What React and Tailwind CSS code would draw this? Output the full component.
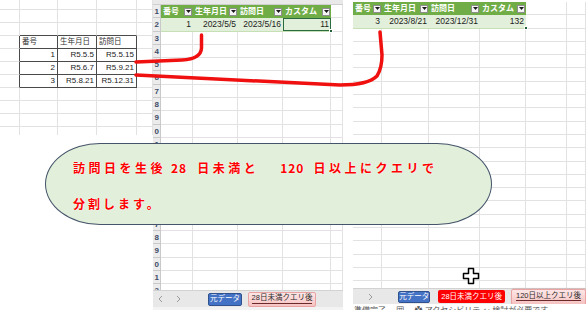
import React from 'react';

const GRID = 'border-r border-b border-[#e2e2e2]';

function DropBtn() {
  return (
    <span className="flex h-[8px] w-[8px] shrink-0 items-center justify-center border border-[#8d8d8d] bg-[#f5f5f5]">
      <svg width="5" height="3" viewBox="0 0 5 3">
        <path d="M0 0h5L2.5 3z" fill="#1a1a1a" />
      </svg>
    </span>
  );
}

function Chevron({ dir }) {
  return (
    <svg width="5" height="8" viewBox="0 0 5 8" className="shrink-0">
      <path
        d={dir === 'left' ? 'M4 1L1 4l3 3' : 'M1 1l3 3-3 3'}
        stroke="#9b9b9b"
        strokeWidth="1"
        fill="none"
      />
    </svg>
  );
}

function LeftSheet() {
  const cols = ['w-[20px]', 'w-[38px]', 'w-[39px]', 'w-[40px]', 'w-[16px]'];
  const table = [
    ['番号', '生年月日', '訪問日'],
    ['1', 'R5.5.5', 'R5.5.15'],
    ['2', 'R5.6.7', 'R5.9.21'],
    ['3', 'R5.8.21', 'R5.12.31'],
  ];
  const rows = Array.from({ length: 11 }, (_, i) => i);

  return (
    <div className="w-[153px] shrink-0">
      <div className="h-[135px] overflow-hidden">
        <div className="-mt-[3px]">
          {rows.map((r) => {
            const t = r - 3;
            const inTable = t >= 0 && t < 4;
            return (
              <div key={r} className="flex h-[13px]">
                {cols.map((w, c) => {
                  const inner = c >= 1 && c <= 3;
                  const rightDark = inTable && c <= 3;
                  const bottomDark = (inTable && inner) || (r === 2 && inner);
                  const text = inTable && inner ? table[t][c - 1] : '';
                  return (
                    <div
                      key={c}
                      className={`${w} flex shrink-0 items-center border-r border-b ${
                        rightDark ? 'border-r-[#4a4a4a]' : 'border-r-[#e2e2e2]'
                      } ${bottomDark ? 'border-b-[#4a4a4a]' : 'border-b-[#e2e2e2]'} ${
                        t === 0
                          ? 'justify-start pl-[2px] text-[7.5px] text-[#333]'
                          : 'justify-end pr-[2px] text-[8px] text-[#222]'
                      } leading-none whitespace-nowrap`}
                    >
                      {text}
                    </div>
                  );
                })}
              </div>
            );
          })}
        </div>
      </div>
    </div>
  );
}

function Sheet({ cols, head, data, rowNums, bodyH, selected }) {
  const rows = Array.from({ length: 22 }, (_, i) => i + 1);
  return (
    <div className={`${bodyH} overflow-hidden`}>
      {rows.map((n) => (
        <div key={n} className="flex h-[13.3px]">
          {rowNums && (
            <div className="w-[8px] shrink-0 overflow-hidden border-r border-b border-[#c9c9c9] bg-[#ececec] pr-[1px] text-right text-[8px] font-bold leading-[13px] text-[#3d4c68]">
              {/* rows 12-16 sit under the callout */}
              {n >= 12 && n <= 16 ? '' : String(n).slice(-1)}
            </div>
          )}
          {cols.map((w, c) => {
            if (n === 1 && c < head.length) {
              return (
                <div
                  key={c}
                  className={`${w} flex shrink-0 items-center justify-between bg-[#70ad47] pl-[2px] pr-[1px]`}
                >
                  <span className="whitespace-nowrap text-[8px] font-bold leading-none text-white">
                    {head[c]}
                  </span>
                  <DropBtn />
                </div>
              );
            }
            if (n === 2 && c < data.length) {
              return (
                <div
                  key={c}
                  className={`${w} relative flex shrink-0 items-center justify-end border-b border-[#c6dfb4] bg-[#e2efda] pr-[2px] text-[8.5px] leading-none text-[#1d1d1d]`}
                >
                  {data[c]}
                  {c === 3 && selected && (
                    <span className="absolute inset-0 border-[1.5px] border-[#2a6b3f]" />
                  )}
                  {c === 3 && (
                    <span className="absolute -bottom-[2px] -right-[2px] h-[4px] w-[4px] border border-white bg-[#1f5e38]" />
                  )}
                </div>
              );
            }
            return <div key={c} className={`${w} shrink-0 ${GRID}`} />;
          })}
        </div>
      ))}
    </div>
  );
}

function MidSheet() {
  return (
    <div className="flex w-[190px] shrink-0 flex-col">
      <div className="h-[5px] border-b border-[#cfcfcf] bg-[#e9e9e9]" />
      <Sheet
        cols={['w-[32px]', 'w-[45px]', 'w-[45px]', 'w-[48px]', 'w-[12px]']}
        head={['番号', '生年月日', '訪問日', 'カスタム']}
        data={['1', '2023/5/5', '2023/5/16', '11']}
        rowNums
        selected
        bodyH="h-[285px]"
      />
      <div className="flex h-[17px] items-center border-t border-[#d2d2d2] bg-[#e8e8e8]">
        <span className="ml-[5px] flex">
          <Chevron dir="left" />
        </span>
        <span className="ml-[13px] flex">
          <Chevron dir="right" />
        </span>
        <span className="ml-[27px] flex h-[13px] w-[34px] items-center justify-center whitespace-nowrap rounded-[2px] border border-[#2f528f] bg-[#4472c4] text-[7.5px] leading-none text-white">
          元データ
        </span>
        <span className="ml-[6px] flex h-[15px] w-[68px] items-center justify-center whitespace-nowrap rounded-[2px] border border-[#eaa3a3] bg-linear-to-b from-[#fde6e6] to-[#f6c2c2] text-[7.5px] leading-none text-[#2b2b2b]">
          <span className="border-b border-[#6b2a2a] pb-[1px]">28日未満クエリ後</span>
        </span>
      </div>
      <div className="h-[3px] bg-[#f3f3f3]" />
    </div>
  );
}

function RightSheet() {
  return (
    <div className="flex w-[233px] shrink-0 flex-col">
      <div className="h-[2px]" />
      <Sheet
        cols={['w-[29px]', 'w-[47px]', 'w-[51px]', 'w-[46px]', 'w-[41px]', 'w-[19px]']}
        head={['番号', '生年月日', '訪問日', 'カスタム']}
        data={['3', '2023/8/21', '2023/12/31', '132']}
        bodyH="h-[286px]"
      />
      <div className="flex h-[16px] items-center border-t border-[#d2d2d2] bg-[#e8e8e8]">
        <span className="ml-[15px] flex">
          <Chevron dir="right" />
        </span>
        <span className="ml-[25px] flex h-[12px] w-[33px] items-center justify-center whitespace-nowrap rounded-[2px] border border-[#2f528f] bg-[#4472c4] text-[7.5px] leading-none text-white">
          元データ
        </span>
        <span className="ml-[8px] flex h-[13px] w-[68px] items-center justify-center whitespace-nowrap rounded-[2px] bg-[#ff0000] text-[7.5px] leading-none text-white">
          28日未満クエリ後
        </span>
        <span className="ml-[6px] flex h-[16px] w-[75px] shrink-0 items-center justify-center whitespace-nowrap rounded-[2px] border border-[#eaa3a3] bg-linear-to-b from-[#fde6e6] to-[#f6c2c2] text-[7.5px] leading-none text-[#2b2b2b] shadow-[1px_0_2px_#c98a8a]">
          <span className="border-b border-[#6b2a2a] pb-[1px]">120日以上クエリ後</span>
        </span>
      </div>
      <div className="h-[6px] overflow-hidden bg-white">
        <div className="whitespace-nowrap pl-[1px] pt-[2px] text-[8px] leading-[10px] text-[#555]">
          準備完了　 囲　 ✿ アクセシビリティ: 検討が必要です
        </div>
      </div>
    </div>
  );
}

export default function App() {
  return (
    <div className="relative flex h-[310px] w-[586px] overflow-hidden bg-white font-['Liberation_Sans','Noto_Sans_CJK_JP',sans-serif]">
      <LeftSheet />
      <MidSheet />
      <div className="w-[10px] shrink-0" />
      <RightSheet />

      {/* hand-drawn red connectors */}
      <svg
        className="pointer-events-none absolute inset-0"
        width="586"
        height="310"
        viewBox="0 0 586 310"
      >
        <path
          d="M136 62 L182 60 Q201 59 201.5 48 L201.5 35"
          stroke="#f01010"
          strokeWidth="3.5"
          fill="none"
          strokeLinecap="round"
          strokeLinejoin="round"
        />
        <path
          d="M136 75 L340 85 Q368 85 377 76 Q382 68 382 55 L380 32"
          stroke="#f01010"
          strokeWidth="3.5"
          fill="none"
          strokeLinecap="round"
          strokeLinejoin="round"
        />
      </svg>

      {/* callout oval */}
      <div className="absolute left-[45px] top-[143px] flex h-[82px] w-[447px] flex-col rounded-[55px/41px] border-[1.5px] border-[#44546a] bg-[#e2efda] pl-[27px] pt-[17px] font-['Noto_Sans_CJK_JP',sans-serif] text-[12px] font-bold leading-[14px] tracking-[3.5px] text-[#ff0000] text-shadow-[0_0_2px_#ffffff]">
        <div className="whitespace-nowrap">
          <span>訪問日を生後</span>
          <span className="ml-[5px] tracking-[1px]">28</span>
          <span className="ml-[10px]">日未満と</span>
          <span className="ml-[21px] tracking-[1px]">120</span>
          <span className="ml-[9px]">日以上にクエリで</span>
        </div>
        <div className="mt-[22px] whitespace-nowrap tracking-[3px]">分割します。</div>
      </div>

      {/* fat cross cursor */}
      <svg
        className="pointer-events-none absolute left-[462px] top-[267px]"
        width="18"
        height="18"
        viewBox="0 0 18 18"
      >
        <path
          d="M6.5 1.5h5v5h5v5h-5v5h-5v-5h-5v-5h5z"
          fill="#ffffff"
          stroke="#000000"
          strokeWidth="1.5"
          strokeLinejoin="round"
        />
      </svg>
    </div>
  );
}
